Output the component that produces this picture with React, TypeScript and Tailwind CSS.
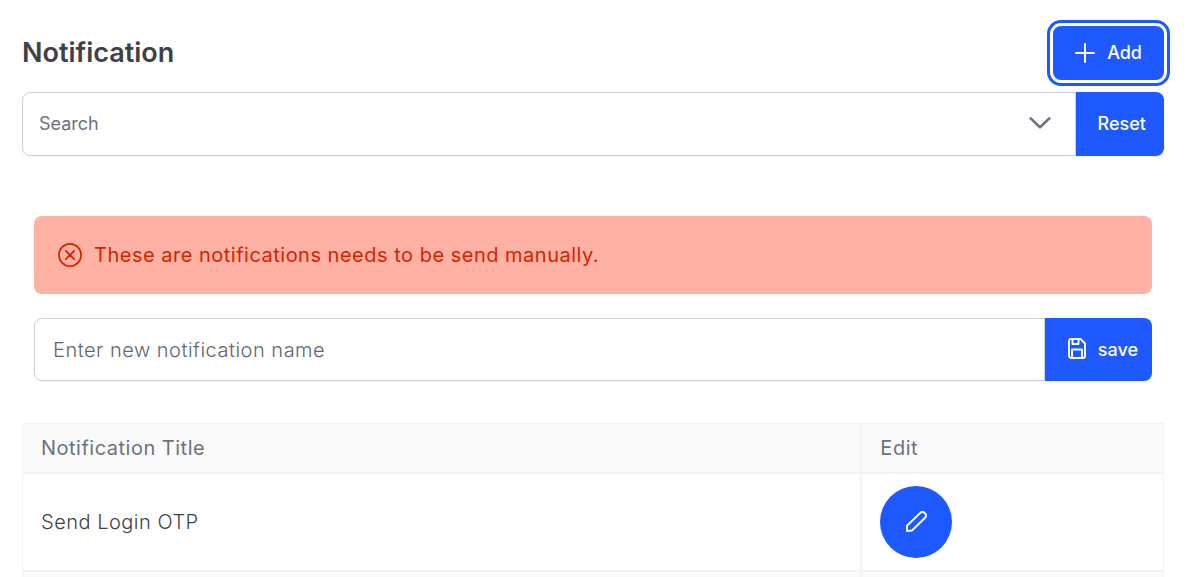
import { useState } from "react";

function PlusIcon() {
  return (
    <svg aria-hidden="true" className="size-5" viewBox="0 0 20 20" fill="none" stroke="currentColor" strokeWidth="2" strokeLinecap="round">
      <path d="M10 1v18M1 10h18" />
    </svg>
  );
}

function ChevronDownIcon() {
  return (
    <svg aria-hidden="true" className="h-3 w-[22px]" viewBox="0 0 22 12" fill="none" stroke="currentColor" strokeWidth="2.6" strokeLinecap="round" strokeLinejoin="round">
      <path d="M1.7 1.4 11 10.2l9.300-8.800" />
    </svg>
  );
}

function TimesCircleIcon() {
  return (
    <svg aria-hidden="true" className="size-6 shrink-0" viewBox="0 0 24 24" fill="none" stroke="currentColor" strokeWidth="1.7" strokeLinecap="round">
      <circle cx="12" cy="12" r="11.1" />
      <path d="m7.800 7.800 8.400 8.400M16.200 7.800l-8.400 8.400" />
    </svg>
  );
}

function SaveIcon() {
  return (
    <svg aria-hidden="true" className="mb-0.5 h-[21px] w-[18px]" viewBox="0 0 18 21" fill="none" stroke="currentColor" strokeWidth="1.9" strokeLinejoin="round">
      <path d="M3 1h9.500L17 5.500V18a2 2 0 0 1-2 2H3a2 2 0 0 1-2-2V3a2 2 0 0 1 2-2Z" />
      <path d="M4.500 1v5h6V1M4 20v-8.500h10V20" />
    </svg>
  );
}

function PencilIcon() {
  return (
    <svg aria-hidden="true" className="mb-0.5 size-[21px]" viewBox="0 0 21 21" fill="none" stroke="currentColor" strokeWidth="2" strokeLinejoin="round">
      <path d="M1 20v-5.200L14.300 1.900a3 3 0 0 1 4.300 0l.5.500a3 3 0 0 1 0 4.300L6 19.500Z" />
    </svg>
  );
}

export default function App() {
  const [name, setName] = useState("");
  const [filter, setFilter] = useState("");

  return (
    <main className="h-screen overflow-hidden bg-white pt-[26px] pr-[25px] pl-[22px] font-[Inter,sans-serif] text-xl text-[#3f4147]">
      <header className="flex items-center justify-between">
        <h1 className="text-[27px] leading-8 font-semibold">Notification</h1>
        <button
          type="button"
          className="flex h-[54px] items-center gap-3 rounded-lg bg-[#1d59ff] px-[22px] text-lg font-medium text-white outline-3 outline-offset-3 outline-[#1d59ff]"
        >
          <PlusIcon />
          Add
        </button>
      </header>

      <div className="mt-3 flex h-16 rounded-lg shadow-xs">
        <div className="grid flex-1 items-center text-[#6b7280]">
          <select
            aria-label="Search"
            value={filter}
            onChange={(e) => setFilter(e.target.value)}
            className="col-start-1 row-start-1 h-full w-full appearance-none rounded-l-lg border border-[#d1d1d5] bg-white px-4 text-lg outline-none"
          >
            <option value="">Search</option>
            <option value="otp">Send Login OTP</option>
          </select>
          <span className="pointer-events-none col-start-1 row-start-1 mr-[25px] mb-0.5 justify-self-end">
            <ChevronDownIcon />
          </span>
        </div>
        <button
          type="button"
          onClick={() => setFilter("")}
          className="rounded-r-lg bg-[#1d59ff] pr-[18px] pl-[22px] text-lg font-medium text-white"
        >
          Reset
        </button>
      </div>

      <section className="mt-[60px] px-3">
        <p role="alert" className="flex h-[78px] items-center gap-3 rounded-lg bg-[#ffb2a3] px-6 tracking-wide text-[#d92100]">
          <TimesCircleIcon />
          These are notifications needs to be send manually.
        </p>
        <form onSubmit={(e) => e.preventDefault()} className="mt-6 flex h-[63px] rounded-lg shadow-xs">
          <input
            type="text"
            aria-label="Notification name"
            placeholder="Enter new notification name"
            value={name}
            onChange={(e) => setName(e.target.value)}
            className="min-w-0 flex-1 rounded-l-lg border border-[#d1d1d5] px-[18px] font-light tracking-wide outline-none placeholder:text-[#5f6672]"
          />
          <button type="submit" className="flex items-center gap-3 rounded-r-lg bg-[#1d59ff] pr-[14px] pl-[23px] text-lg font-medium text-white">
            <SaveIcon />
            save
          </button>
        </form>
      </section>

      <table className="mt-[42px] w-full table-fixed border-separate border-spacing-0 text-left leading-6 tracking-wide">
        <colgroup>
          <col className="w-[73.5%]" />
          <col />
        </colgroup>
        <thead className="bg-[#fafafa] text-[#6b7280]">
          <tr>
            <th className="border border-[#f3f3f4] px-[18px] py-3 font-normal">Notification Title</th>
            <th className="border border-[#f3f3f4] px-[18px] py-3 font-normal">Edit</th>
          </tr>
        </thead>
        <tbody>
          <tr>
            <td className="border border-[#f3f3f4] px-[18px] py-3 font-light">Send Login OTP</td>
            <td className="border border-[#f3f3f4] px-[18px] py-3">
              <button type="button" aria-label="Edit Send Login OTP" className="flex size-[72px] items-center justify-center rounded-full bg-[#1d59ff] text-white">
                <PencilIcon />
              </button>
            </td>
          </tr>
          <tr className="h-24 bg-[#fafafa]">
            <td className="border border-[#f3f3f4]" />
            <td className="border border-[#f3f3f4]" />
          </tr>
        </tbody>
      </table>
    </main>
  );
}
